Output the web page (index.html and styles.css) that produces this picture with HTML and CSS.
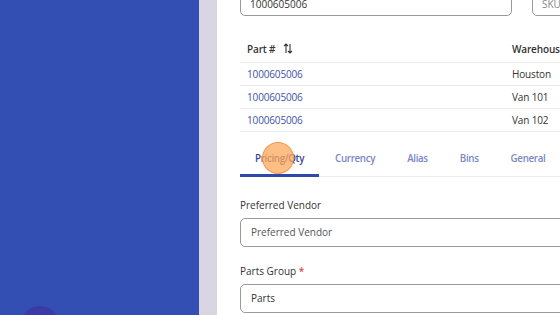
FILE: index.html
```html
<!DOCTYPE html>
<html lang="en">
<head>
    <meta charset="UTF-8">
    <meta name="viewport" content="width=device-width, initial-scale=1.0">
    <title>Part Detail</title>
    <link rel="stylesheet" href="styles.css">
</head>
<body>
    <div class="sidebar">
        <div class="avatar"></div>
    </div>
    <div class="strip"></div>

    <div class="content">
        <div class="search-row">
            <div class="field wide">1000605006</div>
            <div class="field placeholder">SKU</div>
        </div>

        <table class="parts">
            <thead>
                <tr>
                    <th class="col-part">Part #
                        <svg class="sort" width="10" height="11" viewBox="0 0 10 11" fill="none" stroke="#333" stroke-width="1.1">
                            <path d="M3 10V1M1 3l2-2 2 2"/>
                            <path d="M7 1v9M5 8l2 2 2-2"/>
                        </svg>
                    </th>
                    <th>Warehouse</th>
                </tr>
            </thead>
            <tbody>
                <tr><td class="col-part"><a href="#">1000605006</a></td><td>Houston</td></tr>
                <tr><td class="col-part"><a href="#">1000605006</a></td><td>Van 101</td></tr>
                <tr><td class="col-part"><a href="#">1000605006</a></td><td>Van 102</td></tr>
            </tbody>
        </table>

        <ul class="tabs">
            <li class="active">Pricing/Qty<span class="click"></span></li>
            <li>Currency</li>
            <li>Alias</li>
            <li>Bins</li>
            <li>General</li>
        </ul>

        <div class="form-group">
            <label>Preferred Vendor</label>
            <div class="input muted">Preferred Vendor</div>
        </div>
        <div class="form-group">
            <label>Parts Group <span class="req">*</span></label>
            <div class="input">Parts</div>
        </div>
    </div>
</body>
</html>
```

FILE: styles.css
```css
/* General styles */
body {
    font-family: "Open Sans", "Noto Sans", sans-serif;
    margin: 0;
    display: flex;
    height: 315px;
    overflow: hidden;
    background-color: #fff;
    color: #333;
    font-size: 10px;
}
.sidebar {
    width: 199px;
    flex-shrink: 0;
    background-color: #344fb4;
    position: relative;
}
.avatar {
    position: absolute;
    left: 20px;
    top: 306px;
    width: 40px;
    height: 40px;
    border-radius: 50%;
    background-color: #3c3aa6;
}
.strip {
    width: 18px;
    flex-shrink: 0;
    background-color: #d7d6e2;
}
.content {
    flex: none;
    width: 500px;
    padding-left: 23px;
    margin-top: -24px;
}

/* Top search inputs */
.search-row {
    display: flex;
    gap: 20px;
}
.field {
    height: 38px;
    border: 1px solid #9a9a9a;
    border-radius: 5px;
    padding: 0 9px;
    line-height: 54px;
    font-size: 10px;
    color: #333;
}
.field.wide {
    flex: none;
    width: 252px;
}
.field.placeholder {
    flex: 1;
    color: #888;
}

/* Table */
.parts {
    width: 100%;
    border-collapse: collapse;
    margin-top: 19px;
    letter-spacing: -0.15px;
}
.parts th, .parts td {
    text-align: left;
    padding: 0 7px;
    border-bottom: 1px solid #ececec;
    white-space: nowrap;
}
.parts th {
    height: 27px;
    font-weight: 600;
    color: #333;
}
.parts td {
    height: 22px;
}
.parts .col-part {
    width: 251px;
}
.parts a {
    color: #3d52a4;
    text-decoration: none;
}
.sort {
    margin-left: 5px;
    vertical-align: -1px;
}

/* Tabs */
.tabs {
    list-style: none;
    display: flex;
    margin: 9px 0 0 0;
    padding: 0;
    border-bottom: 1px solid #ececec;
    font-size: 9.8px;
    letter-spacing: -0.35px;
}
.tabs li {
    position: relative;
    padding: 11px 16px 9px;
    color: #7b88c6;
    font-weight: 600;
    white-space: nowrap;
}
.tabs li.active {
    padding-left: 15px;
    padding-right: 15px;
    color: #3a468f;
    border-bottom: 3px solid #2e49a8;
    margin-bottom: -1px;
}
.click {
    position: absolute;
    left: 22px;
    top: 1px;
    width: 32px;
    height: 32px;
    border-radius: 50%;
    background-color: rgba(255, 168, 90, 0.75);
    border: 1px solid rgba(240, 140, 60, 0.8);
    box-sizing: border-box;
}

/* Form */
.form-group {
    margin-top: 21px;
}
.form-group + .form-group {
    margin-top: 17px;
}
.form-group label {
    display: block;
    margin-bottom: 6px;
    color: #333;
}
.req {
    color: #d0262e;
}
.input {
    height: 27px;
    line-height: 27px;
    border: 1px solid #9a9a9a;
    border-radius: 5px;
    padding: 0 10px;
    color: #333;
}
.input.muted {
    color: #555;
}
```
